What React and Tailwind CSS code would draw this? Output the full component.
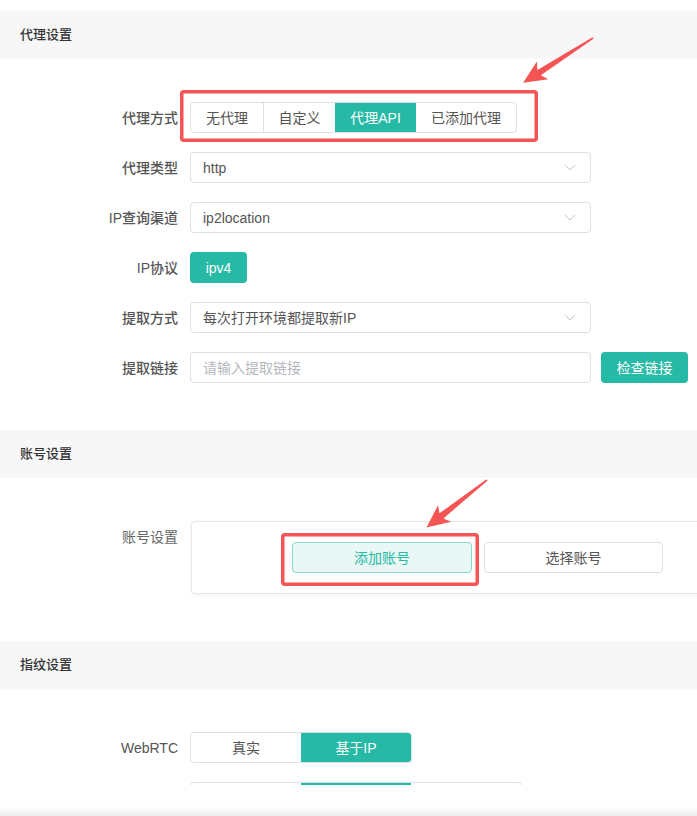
const TEAL = 'bg-[#26b9a5]';

function SectionHeader({ title }) {
  return (
    <div className="h-12 bg-[#f7f7f7] flex items-center pl-5 text-[13px] font-medium text-[#333]">
      {title}
    </div>
  );
}

function Row({ label, children }) {
  return (
    <div className="flex items-center h-[31px] gap-3">
      <div className="w-[178px] text-right text-sm font-medium text-[#555] shrink-0">{label}</div>
      {children}
    </div>
  );
}

function Chevron() {
  return (
    <svg width="12" height="7" viewBox="0 0 12 7" className="shrink-0">
      <path d="M1 1l5 5 5-5" fill="none" stroke="#c0c4cc" strokeWidth="1" />
    </svg>
  );
}

function Select({ value }) {
  return (
    <div className="w-[401px] h-[31px] border border-[#dcdfe6] rounded flex items-center justify-between pl-3 pr-[14px] text-sm text-[#555]">
      <span>{value}</span>
      <Chevron />
    </div>
  );
}

// widths are the measured segment widths
function Segmented({ items, active }) {
  return (
    <div className="flex h-[31px] border border-[#dcdfe6] rounded overflow-hidden text-sm">
      {items.map((it, i) => (
        <div
          key={i}
          style={{ width: it.w }}
          className={
            'flex items-center justify-center shrink-0 ' +
            (i > 0 && i !== active && i - 1 !== active ? 'border-l border-[#dcdfe6] ' : '') +
            (i === active ? TEAL + ' text-white' : 'text-[#555]')
          }
        >
          {it.t}
        </div>
      ))}
    </div>
  );
}

function Arrow({ x, y, angle, len }) {
  const L = len;
  const pts = `0,-0.8 ${L - 19},-3.2 ${L - 23},-10.5 ${L},0 ${L - 23},10.5 ${L - 19},3.2 0,0.8`;
  return (
    <g transform={`translate(${x},${y}) rotate(${angle})`}>
      <polygon points={pts} fill="#f55454" />
    </g>
  );
}

export default function App() {
  return (
    <div className="relative w-[697px] h-[816px] overflow-hidden bg-white font-['Liberation_Sans','Noto_Sans_CJK_SC',sans-serif]">
      <div className="h-[785px] overflow-hidden pt-[11px]">
        <SectionHeader title="代理设置" />
        <div className="pt-[43px] pb-[47px] flex flex-col gap-[19px]">
          <Row label="代理方式">
            <Segmented
              items={[
                { t: '无代理', w: 72 },
                { t: '自定义', w: 72 },
                { t: '代理API', w: 81 },
                { t: '已添加代理', w: 100 },
              ]}
              active={2}
            />
          </Row>
          <Row label="代理类型">
            <Select value="http" />
          </Row>
          <Row label="IP查询渠道">
            <Select value="ip2location" />
          </Row>
          <Row label="IP协议">
            <div className={`w-[57px] h-[31px] rounded ${TEAL} text-white text-sm flex items-center justify-center`}>ipv4</div>
          </Row>
          <Row label="提取方式">
            <Select value="每次打开环境都提取新IP" />
          </Row>
          <Row label="提取链接">
            <div className="w-[401px] h-[31px] border border-[#dcdfe6] rounded flex items-center pl-3 text-sm text-[#b4b7bd]">
              请输入提取链接
            </div>
            <div className={`ml-[-2px] w-[87px] h-[31px] rounded ${TEAL} text-white text-sm flex items-center justify-center`}>
              检查链接
            </div>
          </Row>
        </div>

        <SectionHeader title="账号设置" />
        <div className="pt-[43px] pb-[47px] flex gap-[13px]">
          <div className="w-[178px] text-right text-sm text-[#666] shrink-0 mt-[6px] leading-5">账号设置</div>
          <div className="w-[560px] h-[73px] shrink-0 border border-[#e4e7ed] rounded shadow-[0_1px_4px_rgba(0,0,0,0.05)] pt-5 pl-[100px] flex gap-3">
            <div className="w-[180px] h-[31px] rounded border border-[#86d9cb] bg-[#e9f7f5] text-[#26b9a5] text-sm flex items-center justify-center">
              添加账号
            </div>
            <div className="w-[179px] h-[31px] rounded border border-[#dcdfe6] text-[#555] text-sm flex items-center justify-center">
              选择账号
            </div>
          </div>
        </div>

        <SectionHeader title="指纹设置" />
        <div className="pt-[43px] flex flex-col gap-[19px]">
          <Row label="WebRTC">
            <Segmented items={[{ t: '真实', w: 110 }, { t: '基于IP', w: 110 }]} active={1} />
          </Row>
          {/* next row, scrolled below the fold: only its top edge shows */}
          <Row label="">
            <Segmented items={[{ t: '', w: 110 }, { t: '', w: 110 }, { t: '', w: 110 }]} active={1} />
          </Row>
        </div>
      </div>
      <div className="h-[21px]" />
      <div className="h-[10px] bg-gradient-to-b from-white to-[#ececec]" />

      <svg className="absolute inset-0 pointer-events-none" width="697" height="816">
        <rect x="181.75" y="91.75" width="354.5" height="48.5" rx="2" fill="none" stroke="#f55454" strokeWidth="3.5" />
        <rect x="282.75" y="534.75" width="194.5" height="49.5" rx="2" fill="none" stroke="#f55454" strokeWidth="3.5" />
        <Arrow x={593} y={38} angle={147.3} len={83} />
        <Arrow x={487} y={480} angle={141.8} len={77} />
      </svg>
    </div>
  );
}
